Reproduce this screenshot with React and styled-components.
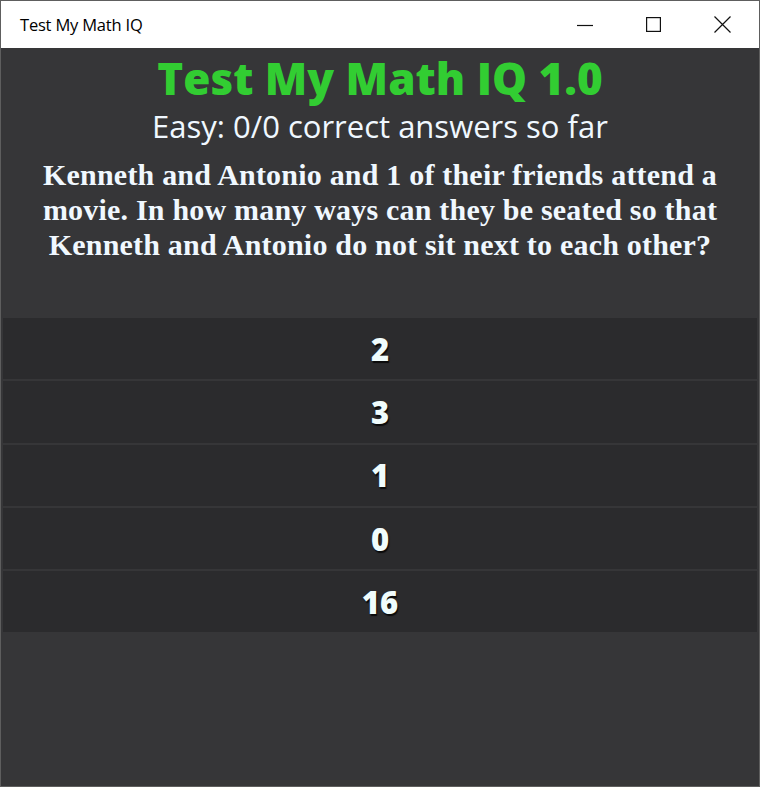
import React from "react";
import styled, { createGlobalStyle } from "styled-components";

const Global = createGlobalStyle`
  html, body { margin: 0; padding: 0; background: #363638; }
  * { box-sizing: border-box; }
`;

const Window = styled.div`
  width: 760px;
  height: 787px;
  border: 1px solid #5e5e5e;
  display: flex;
  flex-direction: column;
  background: #363638;
  overflow: hidden;
`;

const TitleBar = styled.div`
  height: 47px;
  flex: none;
  background: #ffffff;
  display: flex;
  align-items: center;
  padding: 0 2px 0 19px;
`;

const WindowTitle = styled.div`
  flex: 1;
  font-family: "Open Sans", "Noto Sans", sans-serif;
  font-size: 16.5px;
  color: #000;
  letter-spacing: -0.2px;
`;

const CaptionButton = styled.div`
  width: 69px;
  height: 47px;
  display: flex;
  align-items: center;
  justify-content: center;
  color: #111;
`;

const Content = styled.main`
  flex: 1;
  display: flex;
  flex-direction: column;
  align-items: stretch;
  padding: 4px 2px 0;
`;

const Heading = styled.h1`
  margin: 0;
  text-align: center;
  font-family: "Open Sans", sans-serif;
  font-weight: 800;
  font-size: 44px;
  line-height: 52px;
  color: #32cd32;
`;

const Score = styled.div`
  margin-top: 3px;
  text-align: center;
  font-family: "Open Sans", sans-serif;
  font-weight: 500;
  font-size: 31px;
  line-height: 38px;
  color: #f0f8ff;
`;

const Question = styled.p`
  width: 700px;
  margin: 12px auto 0;
  text-align: center;
  font-family: "Liberation Serif", serif;
  font-weight: 700;
  font-size: 30px;
  line-height: 35px;
  letter-spacing: 0.2px;
  color: #f0f8ff;
  height: 161px;
`;

const Answers = styled.div`
  display: flex;
  flex-direction: column;
  gap: 2px;
`;

const Answer = styled.button`
  height: 61.3px;
  border: none;
  background: #2b2b2d;
  display: flex;
  align-items: center;
  justify-content: center;
  font-family: "Open Sans", sans-serif;
  font-weight: 800;
  font-size: 31px;
  color: #f0fcfc;
  text-shadow: 1px 2px 1px #0a0a0a;
  padding: 0;
  cursor: pointer;
`;

const answers = ["2", "3", "1", "0", "16"];

export default function App() {
  return (
    <>
      <Global />
      <Window>
        <TitleBar>
          <WindowTitle>Test My Math IQ</WindowTitle>
          <CaptionButton>
            <svg width="16" height="16" viewBox="0 0 16 16">
              <line x1="0" y1="8.5" x2="16" y2="8.5" stroke="#111" strokeWidth="1.2" />
            </svg>
          </CaptionButton>
          <CaptionButton>
            <svg width="15" height="15" viewBox="0 0 15 15">
              <rect x="0.6" y="0.6" width="13.8" height="13.8" fill="none" stroke="#111" strokeWidth="1.2" />
            </svg>
          </CaptionButton>
          <CaptionButton>
            <svg width="17" height="17" viewBox="0 0 17 17">
              <path d="M0.5 0.5 L16.5 16.5 M16.5 0.5 L0.5 16.5" stroke="#111" strokeWidth="1.2" />
            </svg>
          </CaptionButton>
        </TitleBar>
        <Content>
          <Heading>Test My Math IQ 1.0</Heading>
          <Score>Easy: 0/0 correct answers so far</Score>
          <Question>
            Kenneth and Antonio and 1 of their friends attend a movie. In how many ways can they be seated so that Kenneth and Antonio do not sit next to each other?
          </Question>
          <Answers>
            {answers.map((a) => (
              <Answer key={a}>{a}</Answer>
            ))}
          </Answers>
        </Content>
      </Window>
    </>
  );
}
